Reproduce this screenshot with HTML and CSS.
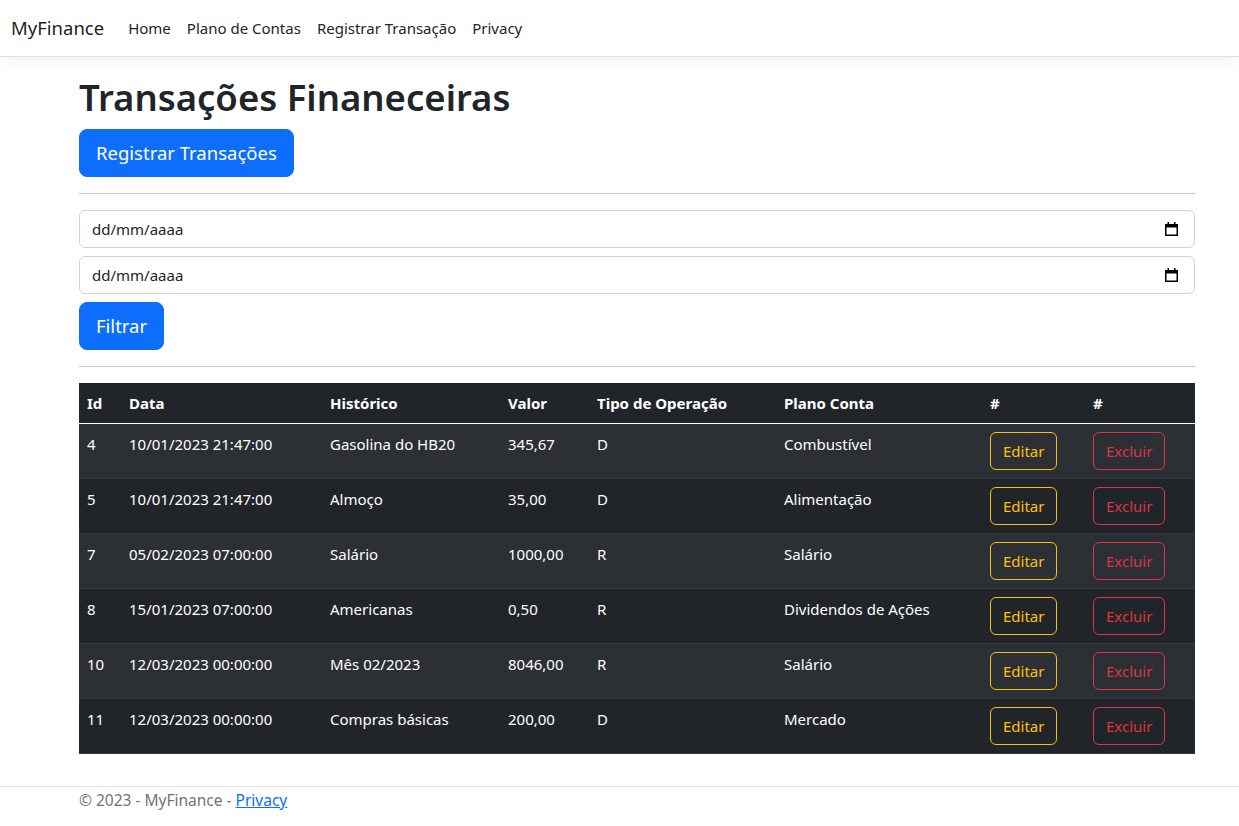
FILE: index.html
```html
<!DOCTYPE html>
<html lang="pt-BR">
<head>
<meta charset="utf-8">
<title>Transações - MyFinance</title>
<link rel="stylesheet" href="styles.css">
</head>
<body>
<header class="navbar">
  <a class="brand" href="#">MyFinance</a>
  <nav class="nav">
    <a class="nav-link" href="#">Home</a>
    <a class="nav-link" href="#">Plano de Contas</a>
    <a class="nav-link" href="#">Registrar Transação</a>
    <a class="nav-link" href="#">Privacy</a>
  </nav>
</header>
<main class="main">
  <h1 class="title">Transações Finaneceiras</h1>
  <a class="btn btn-primary" href="#">Registrar Transações</a>
  <hr class="divider">
  <form class="filter">
    <div class="date-input"><span>dd/mm/aaaa</span>
      <svg class="cal" width="13" height="14" viewBox="0 0 13 14"><rect x="0.75" y="2.75" width="11.5" height="10.5" fill="none" stroke="#000" stroke-width="1.5"/><rect x="0" y="2" width="13" height="3.5" fill="#000"/><rect x="2.5" y="0" width="1.5" height="3" fill="#000"/><rect x="9" y="0" width="1.5" height="3" fill="#000"/></svg>
    </div>
    <div class="date-input"><span>dd/mm/aaaa</span>
      <svg class="cal" width="13" height="14" viewBox="0 0 13 14"><rect x="0.75" y="2.75" width="11.5" height="10.5" fill="none" stroke="#000" stroke-width="1.5"/><rect x="0" y="2" width="13" height="3.5" fill="#000"/><rect x="2.5" y="0" width="1.5" height="3" fill="#000"/><rect x="9" y="0" width="1.5" height="3" fill="#000"/></svg>
    </div>
    <button class="btn btn-primary" type="button">Filtrar</button>
  </form>
  <hr class="divider">
  <table class="table">
    <colgroup>
      <col class="c-id"><col class="c-data"><col class="c-hist"><col class="c-valor"><col class="c-tipo"><col class="c-plano"><col class="c-ed"><col class="c-ex">
    </colgroup>
    <thead>
      <tr><th>Id</th><th>Data</th><th>Histórico</th><th>Valor</th><th>Tipo de Operação</th><th>Plano Conta</th><th>#</th><th>#</th></tr>
    </thead>
    <tbody>
      <tr><td>4</td><td>10/01/2023 21:47:00</td><td>Gasolina do HB20</td><td>345,67</td><td>D</td><td>Combustível</td><td><a class="btn-sm btn-warn" href="#">Editar</a></td><td><a class="btn-sm btn-danger" href="#">Excluir</a></td></tr>
      <tr><td>5</td><td>10/01/2023 21:47:00</td><td>Almoço</td><td>35,00</td><td>D</td><td>Alimentação</td><td><a class="btn-sm btn-warn" href="#">Editar</a></td><td><a class="btn-sm btn-danger" href="#">Excluir</a></td></tr>
      <tr><td>7</td><td>05/02/2023 07:00:00</td><td>Salário</td><td>1000,00</td><td>R</td><td>Salário</td><td><a class="btn-sm btn-warn" href="#">Editar</a></td><td><a class="btn-sm btn-danger" href="#">Excluir</a></td></tr>
      <tr><td>8</td><td>15/01/2023 07:00:00</td><td>Americanas</td><td>0,50</td><td>R</td><td>Dividendos de Ações</td><td><a class="btn-sm btn-warn" href="#">Editar</a></td><td><a class="btn-sm btn-danger" href="#">Excluir</a></td></tr>
      <tr><td>10</td><td>12/03/2023 00:00:00</td><td>Mês 02/2023</td><td>8046,00</td><td>R</td><td>Salário</td><td><a class="btn-sm btn-warn" href="#">Editar</a></td><td><a class="btn-sm btn-danger" href="#">Excluir</a></td></tr>
      <tr><td>11</td><td>12/03/2023 00:00:00</td><td>Compras básicas</td><td>200,00</td><td>D</td><td>Mercado</td><td><a class="btn-sm btn-warn" href="#">Editar</a></td><td><a class="btn-sm btn-danger" href="#">Excluir</a></td></tr>
    </tbody>
  </table>
</main>
<footer class="footer">
  <div class="footer-inner">© 2023 - MyFinance - <a class="footer-link" href="#">Privacy</a></div>
</footer>
</body>
</html>
```

FILE: styles.css
```css
* { box-sizing: border-box; }

body {
  margin: 0;
  font-family: "Noto Sans", "Open Sans", sans-serif;
  font-size: 15px;
  line-height: 24px;
  color: #212529;
  background: #fff;
}

a { text-decoration: none; }

.navbar {
  display: flex;
  align-items: center;
  padding: 8px 12px 8px 11px;
  border-bottom: 1px solid #dee2e6;
  box-shadow: 0 4px 12px rgba(0, 0, 0, 0.05);
  margin-bottom: 16px;
}

.brand {
  font-size: 18.5px;
  line-height: 30px;
  padding: 5px 0;
  margin-right: 16px;
  color: rgba(0, 0, 0, 0.9);
}

.nav { display: flex; }

.nav-link {
  padding: 8px;
  color: #212529;
}

.main {
  margin: 0 44px 0 79px;
  padding-bottom: 16px;
}

.title {
  margin: 0 0 8px;
  font-size: 36.5px;
  line-height: 48px;
  font-weight: 600;
}

.btn {
  display: inline-block;
  border: 1px solid transparent;
  font-family: inherit;
  font-size: 18.5px;
  line-height: 30px;
  padding: 8px 16px;
  border-radius: 8px;
  cursor: pointer;
}

.btn-primary {
  background: #0d6efd;
  border-color: #0d6efd;
  color: #fff;
}

.divider {
  margin: 16px 0;
  border: 0;
  border-top: 1px solid #c8c9ca;
}

.filter {
  display: flex;
  flex-direction: column;
  align-items: flex-start;
  gap: 8px;
}

.date-input {
  align-self: stretch;
  display: flex;
  align-items: center;
  justify-content: space-between;
  height: 38px;
  padding: 6px 16px 6px 12px;
  border: 1px solid #ced4da;
  border-radius: 6px;
  line-height: 24px;
}

.cal { display: block; }

.table {
  width: 100%;
  border-collapse: collapse;
  table-layout: fixed;
  background: #212529;
  color: #fff;
  margin-bottom: 16px;
}

.c-id { width: 42px; }
.c-data { width: 201px; }
.c-hist { width: 178px; }
.c-valor { width: 89px; }
.c-tipo { width: 187px; }
.c-plano { width: 206px; }
.c-ed { width: 103px; }
.c-ex { width: 110px; }

.table th,
.table td {
  padding: 8px;
  text-align: left;
  vertical-align: top;
  border-bottom: 1px solid #373b3e;
  white-space: nowrap;
}

.table th {
  font-weight: 700;
  border-bottom-color: #fff;
}

.table tbody tr:nth-child(odd) td { background: #2c3034; }

.btn-sm {
  display: inline-block;
  padding: 6px 12px;
  border: 1px solid;
  border-radius: 6px;
  line-height: 24px;
  font-size: 15px;
}

.btn-warn { color: #ffc107; border-color: #ffc107; }
.btn-danger { color: #dc3545; border-color: #dc3545; }

.footer {
  border-top: 1px solid #dee2e6;
  color: #6c757d;
  font-size: 15.5px;
}

.footer-inner {
  padding-left: 79px;
  line-height: 26px;
}

.footer-link {
  color: #0d6efd;
  text-decoration: underline;
}
```
